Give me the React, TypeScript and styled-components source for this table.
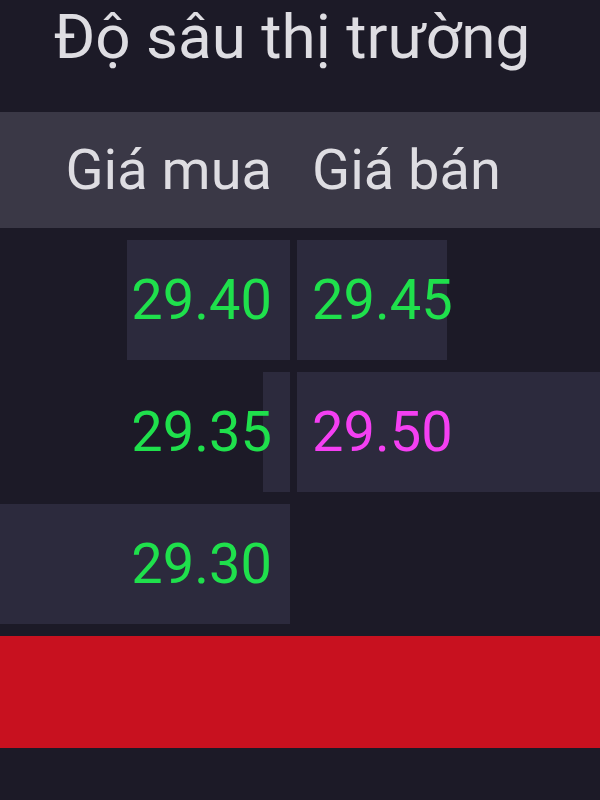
import React from "react";
import styled, { createGlobalStyle } from "styled-components";

const GlobalStyle = createGlobalStyle`
    html, body {
        margin: 0;
        padding: 0;
        background: #1c1a27;
    }
    body {
        font-family: Roboto, "Noto Sans", sans-serif;
    }
`;

const Khung = styled.div`
    width: 600px;
    height: 800px;
    background: #1c1a27;
    display: flex;
    flex-direction: column;
`;

const TieuDe = styled.h1`
    margin: 0;
    height: 112px;
    display: flex;
    align-items: flex-start;
    justify-content: center;
    padding: 6px 16px 0 0;
    box-sizing: border-box;
    color: #dedde2;
    font-size: 62px;
    font-weight: 400;
    line-height: 62px;
    white-space: nowrap;
`;

const HangTieuDe = styled.div`
    height: 116px;
    background: #3a3846;
    display: grid;
    grid-template-columns: 290px 1fr;
    column-gap: 7px;
    align-items: center;
    margin-bottom: 12px;
`;

const CotTieuDe = styled.div<{ $ben: "mua" | "ban" }>`
    color: #dedde2;
    font-size: 56px;
    line-height: 66px;
    text-align: ${(p) => (p.$ben === "mua" ? "right" : "left")};
    padding: ${(p) => (p.$ben === "mua" ? "0 18px 0 0" : "0 0 0 15px")};
`;

const DanhSach = styled.div`
    display: flex;
    flex-direction: column;
    gap: 12px;
`;

const Hang = styled.div`
    height: 120px;
    display: grid;
    grid-template-columns: 290px 1fr;
    column-gap: 7px;
`;

const O = styled.div<{ $ben: "mua" | "ban"; $mau: string }>`
    display: flex;
    align-items: center;
    justify-content: ${(p) => (p.$ben === "mua" ? "flex-end" : "flex-start")};
    padding: ${(p) => (p.$ben === "mua" ? "0 18px 0 0" : "0 0 0 15px")};
    background-image: linear-gradient(#2c2a3d, #2c2a3d);
    background-repeat: no-repeat;
    background-position: ${(p) => (p.$ben === "mua" ? "right" : "left")} top;
    color: ${(p) => p.$mau};
    font-size: 56px;
`;

const NutDo = styled.div`
    height: 112px;
    margin-top: 12px;
    background: #c8111f;
`;

interface IMuc {
    gia: string;
    kl: number;
    mau: string;
}

const mua: IMuc[] = [
    { gia: "29.40", kl: 163, mau: "#1fe04c" },
    { gia: "29.35", kl: 27, mau: "#1fe04c" },
    { gia: "29.30", kl: 290, mau: "#1fe04c" },
];

const ban: (IMuc | null)[] = [
    { gia: "29.45", kl: 150, mau: "#1fe04c" },
    { gia: "29.50", kl: 303, mau: "#f43ff2" },
    null,
];

export default function App() {
    return (
        <>
            <GlobalStyle />
            <Khung>
                <TieuDe>Độ sâu thị trường</TieuDe>
                <HangTieuDe>
                    <CotTieuDe $ben="mua">Giá mua</CotTieuDe>
                    <CotTieuDe $ben="ban">Giá bán</CotTieuDe>
                </HangTieuDe>
                <DanhSach>
                    {mua.map((m, i) => {
                        const b = ban[i];
                        return (
                            <Hang key={m.gia}>
                                <O
                                    $ben="mua"
                                    $mau={m.mau}
                                    style={{ backgroundSize: `${m.kl}px 100%` }}
                                >
                                    {m.gia}
                                </O>
                                <O
                                    $ben="ban"
                                    $mau={b ? b.mau : "transparent"}
                                    style={{ backgroundSize: `${b ? b.kl : 0}px 100%` }}
                                >
                                    {b ? b.gia : ""}
                                </O>
                            </Hang>
                        );
                    })}
                </DanhSach>
                <NutDo />
            </Khung>
        </>
    );
}
